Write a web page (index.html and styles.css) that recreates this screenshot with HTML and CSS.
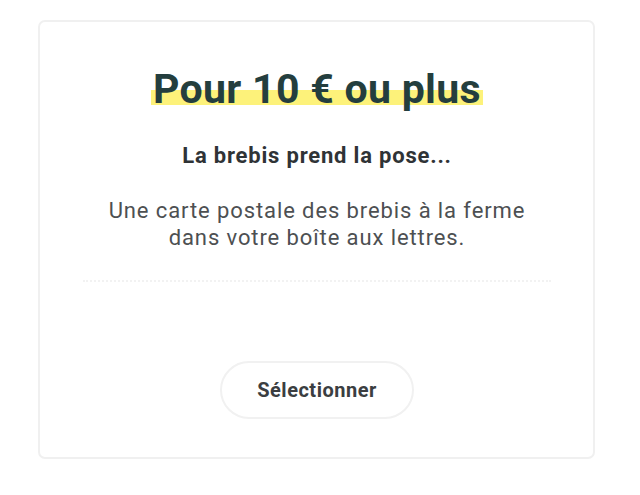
FILE: index.html
```html
<!DOCTYPE html>
<html lang="fr">
<head>
  <meta charset="UTF-8">
  <meta name="viewport" content="width=device-width, initial-scale=1.0">
  <title>Contrepartie</title>
  <link rel="stylesheet" href="styles.css">
</head>
<body>
  <div class="reward-card">
    <h2 class="reward-title"><span class="highlight">Pour 10 € ou plus</span></h2>
    <h3 class="reward-name">La brebis prend la pose...</h3>
    <p class="reward-desc">Une carte postale des brebis à la ferme<br>dans votre boîte aux lettres.</p>
    <hr class="reward-divider">
    <button class="select-button">Sélectionner</button>
  </div>
</body>
</html>
```

FILE: styles.css
```css
body {
  margin: 0;
  padding: 20px 45px 36px 38px;
  font-family: Roboto, "Noto Sans", Arial, sans-serif;
  background-color: #fff;
}
/* Reward card */
.reward-card {
  box-sizing: border-box;
  height: 439px;
  border: 2px solid #f0f0f0;
  border-radius: 7px;
  padding: 43px 42px 0 43px;
  display: flex;
  flex-direction: column;
  align-items: center;
  text-align: center;
}
.reward-title {
  margin: 0;
  font-size: 41px;
  font-weight: 700;
  letter-spacing: 0.3px;
  color: #243e3e;
  line-height: 48px;
}
.highlight {
  background: linear-gradient(transparent 52%, #fdf27a 52%, #fdf27a 83%, transparent 83%);
  padding: 0 2px;
}
.reward-name {
  margin: 29px 0 0;
  font-size: 22px;
  font-weight: 700;
  letter-spacing: 0.8px;
  color: #2f3336;
  line-height: 28px;
}
.reward-desc {
  margin: 27px 0 0;
  font-size: 22px;
  letter-spacing: 0.9px;
  color: #4d5052;
  line-height: 27px;
}
.reward-divider {
  align-self: stretch;
  margin: 29px 0 0;
  border: none;
  border-top: 2px dotted #f2f2f2;
}
.select-button {
  margin-top: 79px;
  width: 194px;
  height: 58px;
  border: 2px solid #f1f1f1;
  border-radius: 29px;
  background-color: #fff;
  font-family: inherit;
  font-size: 20px;
  font-weight: 700;
  letter-spacing: 0.5px;
  color: #3b3e41;
  cursor: pointer;
}
.select-button:hover {
  background-color: #fafafa;
}
```
